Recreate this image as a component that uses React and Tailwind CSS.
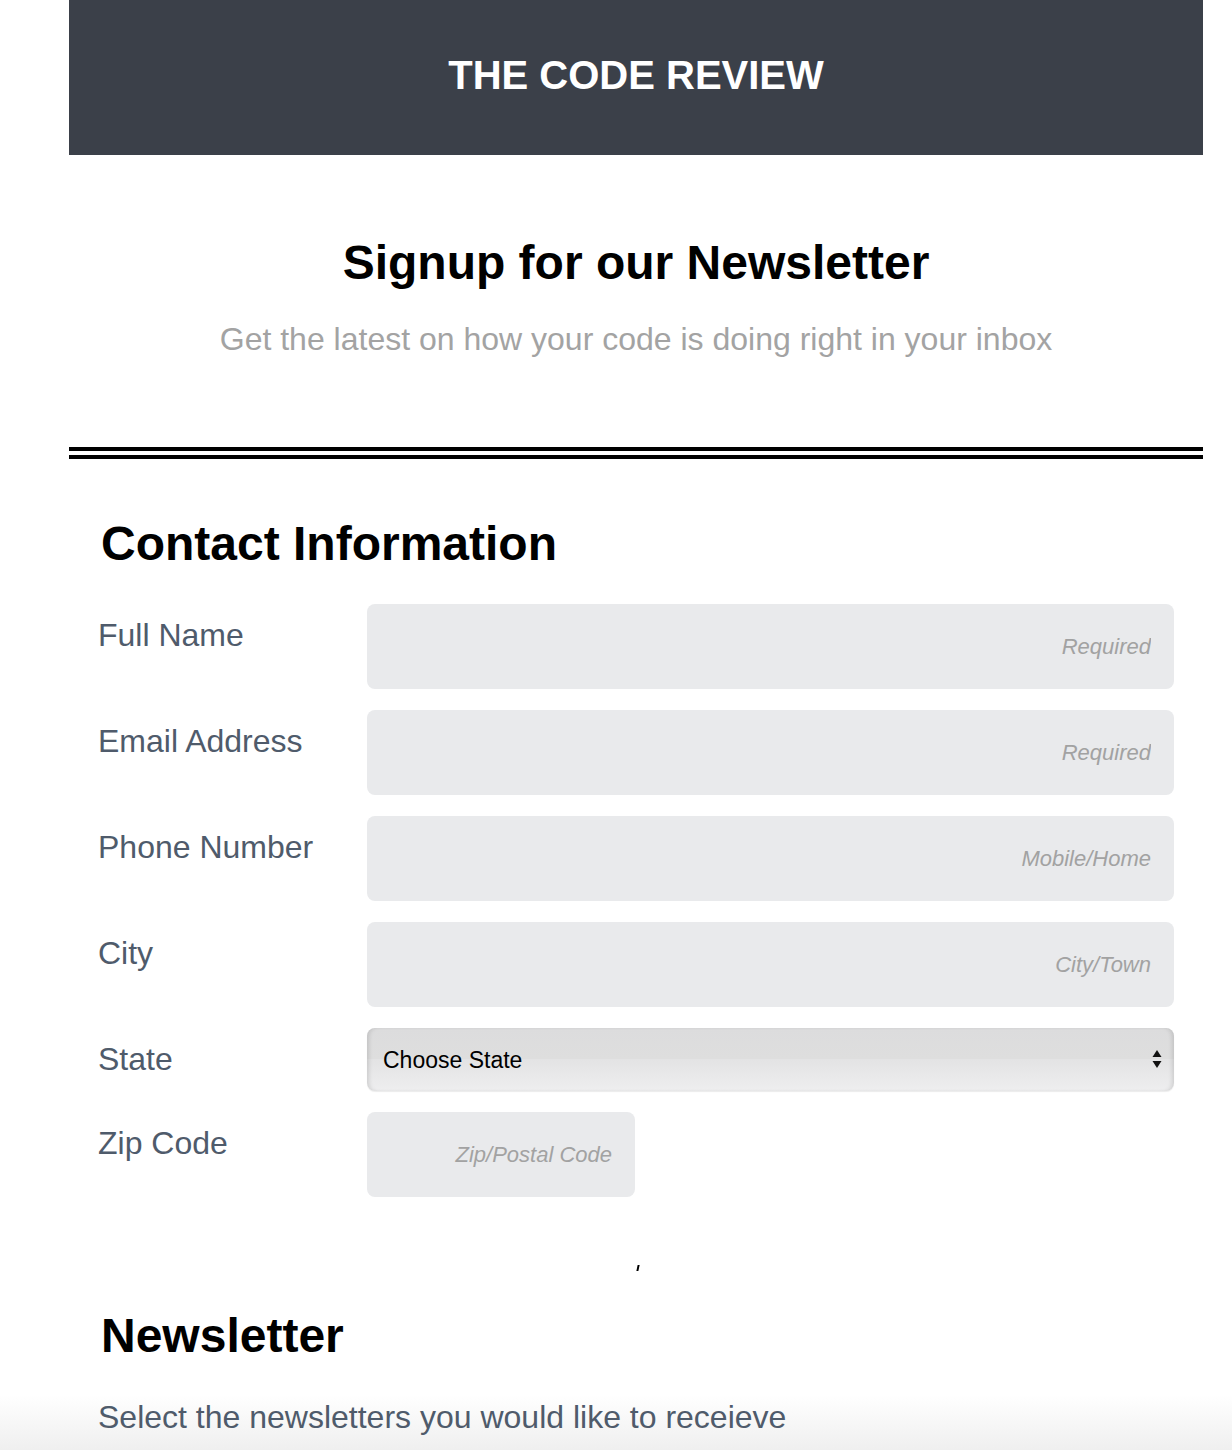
import React from "react";

const font = { fontFamily: '"Liberation Sans", Arial, sans-serif' };

function Field({ label, placeholder, narrow }) {
  return (
    <>
      <label className="pt-[13px] text-[32px] leading-[37px] text-[#4f5b6b]">{label}</label>
      <div>
        <input
          type="text"
          placeholder={placeholder}
          className={`${narrow ? "w-[268px]" : "w-full"} h-[85px] rounded-[8px] bg-[#e9eaec] px-[23px] text-right text-[22px] outline-none placeholder:italic placeholder:text-[#a2a2a2]`}
          style={font}
        />
      </div>
    </>
  );
}

export default function App() {
  return (
    <div
      className="min-h-[1450px] w-full bg-[linear-gradient(to_bottom,#ffffff_1395px,#efefef_1450px)]"
      style={font}
    >
      <div className="ml-[69px] w-[1134px]">
        <header className="flex h-[155px] items-center justify-center bg-[#3b4049] pb-[5px]">
          <h1 className="text-[40px] font-bold leading-[46px] text-white">THE CODE REVIEW</h1>
        </header>

        <section className="text-center">
          <h2 className="mt-[80px] text-[48px] font-bold leading-[55px] text-black">Signup for our Newsletter</h2>
          <p className="mt-[31px] text-[32px] leading-[37px] text-[#a3a3a3]">
            Get the latest on how your code is doing right in your inbox
          </p>
        </section>

        <div className="mt-[89px] border-t-[12px] border-double border-black" />

        <section className="px-[29px]">
          <h2 className="ml-[3px] mt-[57px] text-[48px] font-bold leading-[55px] text-black">Contact Information</h2>
          <div className="mt-[33px] grid grid-cols-[269px_1fr] gap-y-[21px]">
            <Field label="Full Name" placeholder="Required" />
            <Field label="Email Address" placeholder="Required" />
            <Field label="Phone Number" placeholder="Mobile/Home" />
            <Field label="City" placeholder="City/Town" />
            <label className="pt-[13px] text-[32px] leading-[37px] text-[#4f5b6b]">State</label>
            <div className="relative h-[63px]">
              <select
                className="h-[63px] w-full appearance-none rounded-[8px] bg-[linear-gradient(to_bottom,#dcdcdd_0%,#dedede_50%,#e3e3e4_50%,#eeeeef_100%)] pl-[16px] pt-[2px] text-[23px] text-black shadow-[inset_4px_0_4px_-2px_rgba(0,0,0,0.12),inset_-4px_0_4px_-2px_rgba(0,0,0,0.12),0_1px_1px_rgba(0,0,0,0.08)] outline-none"
                style={font}
                defaultValue=""
              >
                <option value="">Choose State</option>
              </select>
              <svg
                className="pointer-events-none absolute right-[12px] top-[21px]"
                width="10"
                height="22"
                viewBox="0 0 10 22"
              >
                <path d="M5 1 L9.5 8 L0.5 8 Z" fill="#111" />
                <path d="M0.5 12 L9.5 12 L5 19 Z" fill="#111" />
              </svg>
            </div>
            <Field label="Zip Code" placeholder="Zip/Postal Code" narrow />
          </div>

          <div className="mt-[68px] flex justify-center">
            <div className="ml-[3px] h-[6px] w-[2px] -skew-x-12 bg-black" />
          </div>

          <h2 className="ml-[3px] mt-[37px] text-[48px] font-bold leading-[55px] text-black">Newsletter</h2>
          <p className="mt-[36px] text-[32px] leading-[37px] text-[#4f5b6b]">
            Select the newsletters you would like to receieve
          </p>
        </section>
      </div>
    </div>
  );
}
